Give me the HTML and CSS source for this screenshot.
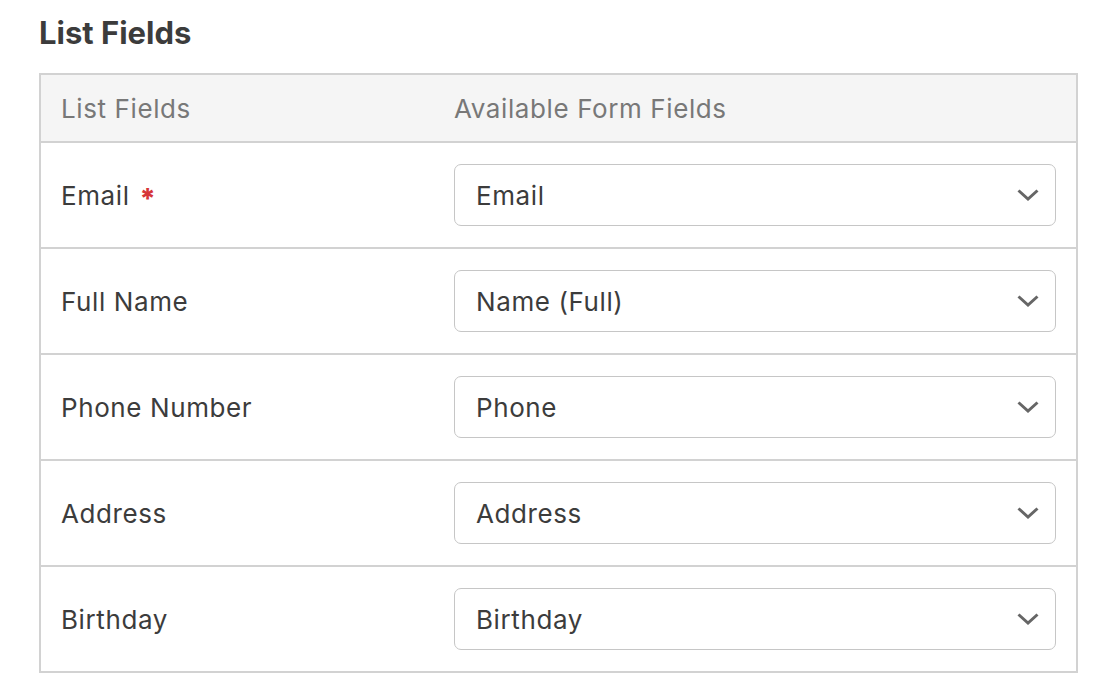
FILE: index.html
```html
<!DOCTYPE html>
<html>
<head>
<meta charset="utf-8">
<link rel="stylesheet" href="styles.css">
</head>
<body>
<div class="page">
  <h2 class="title">List Fields</h2>
  <div class="table">
    <div class="row head">
      <div class="col-left">List Fields</div>
      <div class="col-right">Available Form Fields</div>
    </div>
    <div class="row">
      <div class="col-left">Email <span class="req">*</span></div>
      <div class="col-right"><div class="select"><span>Email</span><svg class="chev" viewBox="0 0 22 12"><path d="M1.5 1.5 L11 10 L20.5 1.5" /></svg></div></div>
    </div>
    <div class="row">
      <div class="col-left">Full Name</div>
      <div class="col-right"><div class="select"><span>Name (Full)</span><svg class="chev" viewBox="0 0 22 12"><path d="M1.5 1.5 L11 10 L20.5 1.5" /></svg></div></div>
    </div>
    <div class="row">
      <div class="col-left">Phone Number</div>
      <div class="col-right"><div class="select"><span>Phone</span><svg class="chev" viewBox="0 0 22 12"><path d="M1.5 1.5 L11 10 L20.5 1.5" /></svg></div></div>
    </div>
    <div class="row">
      <div class="col-left">Address</div>
      <div class="col-right"><div class="select"><span>Address</span><svg class="chev" viewBox="0 0 22 12"><path d="M1.5 1.5 L11 10 L20.5 1.5" /></svg></div></div>
    </div>
    <div class="row">
      <div class="col-left">Birthday</div>
      <div class="col-right"><div class="select"><span>Birthday</span><svg class="chev" viewBox="0 0 22 12"><path d="M1.5 1.5 L11 10 L20.5 1.5" /></svg></div></div>
    </div>
  </div>
</div>
</body>
</html>
```
FILE: styles.css
```css
html, body {
  margin: 0;
  padding: 0;
  background: #ffffff;
}
body {
  font-family: Inter, "Liberation Sans", Arial, sans-serif;
  color: #3c434a;
}
.page {
  padding: 14px 0 0 39px;
  width: 1039px;
}
.title {
  margin: 0 0 21px 0;
  font-size: 31px;
  line-height: 38px;
  font-weight: 700;
  color: #3c3c3c;
}
.table {
  border: 2px solid #d2d2d2;
  box-sizing: border-box;
}
.row {
  display: flex;
  align-items: center;
  height: 104px;
  border-top: 2px solid #d2d2d2;
  font-size: 26px;
  letter-spacing: 0.6px;
  color: #3c3c3c;
}
.row.head {
  border-top: none;
  height: 66px;
  background: #f5f5f5;
  color: #787878;
}
.col-left {
  width: 373px;
  padding-left: 20px;
}
.col-right {
  flex: 1;
  padding: 0 20px;
}
.req {
  color: #d63638;
  font-size: 28px;
  font-weight: 800;
  margin-left: 2px;
  position: relative;
  top: 4px;
}
.select {
  height: 62px;
  box-sizing: border-box;
  border: 1.5px solid #c6c6c6;
  border-radius: 7px;
  display: flex;
  align-items: center;
  justify-content: space-between;
  padding: 0 16px 0 21px;
  color: #3c3c3c;
}
.chev {
  width: 22px;
  height: 12px;
}
.chev path {
  fill: none;
  stroke: #666666;
  stroke-width: 3;
}
```
